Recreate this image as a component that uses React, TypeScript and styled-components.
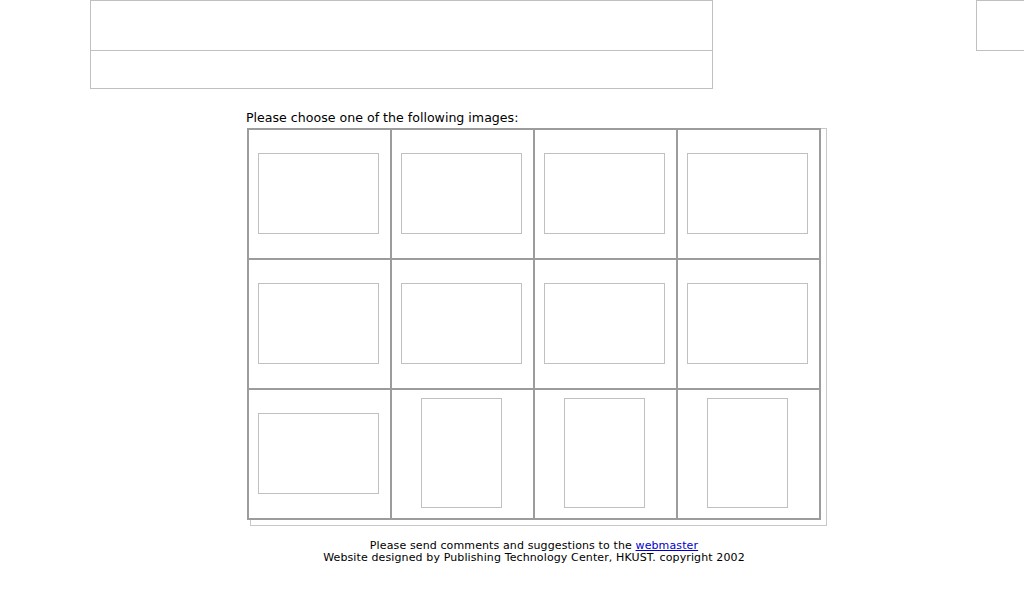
import React from "react";
import styled, { createGlobalStyle } from "styled-components";

const Global = createGlobalStyle`
  html, body { margin: 0; padding: 0; background: #ffffff; }
  body { overflow: hidden; font-family: "DejaVu Sans", Verdana, sans-serif; color: #000; }
`;

const Page = styled.div`
  width: 1024px;
  height: 603px;
  display: flex;
  flex-direction: column;
`;

const Header = styled.div`
  display: flex;
  align-items: flex-start;
  padding-left: 90px;
`;

const Banner = styled.div`
  width: 621px;
  border: 1px solid #c0c0c0;
  display: flex;
  flex-direction: column;
  flex-shrink: 0;
`;

const BannerRow = styled.div<{ $h: number; $divider?: boolean }>`
  height: ${(p) => p.$h}px;
  border-bottom: ${(p) => (p.$divider ? "1px solid #c0c0c0" : "none")};
`;

const SideBanner = styled.div`
  margin-left: auto;
  width: 47px;
  height: 49px;
  border: 1px solid #c0c0c0;
  border-right: none;
  flex-shrink: 0;
`;

const Main = styled.div`
  margin-left: 246px;
  margin-top: 21px;
  display: flex;
  flex-direction: column;
`;

const Caption = styled.div`
  font-size: 12.6px;
  line-height: 16px;
  height: 16px;
  margin-bottom: 2px;
  white-space: nowrap;
`;

const GridWrap = styled.div`
  position: relative;
  margin-left: 1px;
  width: 574px;
  &::before {
    content: "";
    position: absolute;
    left: 3px;
    top: 0;
    width: 575px;
    height: 396px;
    border: 1px solid #c8c8c8;
  }
`;

const Grid = styled.div`
  position: relative;
  display: grid;
  grid-template-columns: repeat(4, 141px);
  grid-auto-rows: 128px;
  gap: 2px;
  padding: 2px;
  background: #9c9c9c;
`;

const Cell = styled.div`
  background: #ffffff;
  display: flex;
  align-items: center;
  justify-content: center;
`;

const Thumb = styled.div<{ $portrait?: boolean }>`
  box-sizing: border-box;
  width: ${(p) => (p.$portrait ? 81 : 121)}px;
  height: ${(p) => (p.$portrait ? 110 : 81)}px;
  border: 1px solid #c0c0c0;
  background: #ffffff;
  margin-left: ${(p) => (p.$portrait ? -2 : -3)}px;
  margin-top: ${(p) => (p.$portrait ? -3 : -2)}px;
`;

const Footer = styled.div`
  margin-left: 247px;
  margin-top: 20px;
  width: 574px;
  text-align: center;
  font-size: 11px;
  letter-spacing: 0.12px;
  line-height: 12px;
  white-space: nowrap;
`;

const Link = styled.a`
  color: #0000cc;
  text-decoration: underline;
`;

const images = [
  false, false, false, false,
  false, false, false, false,
  false, true, true, true,
];

export default function App() {
  return (
    <Page>
      <Global />
      <Header>
        <Banner>
          <BannerRow $h={49} $divider />
          <BannerRow $h={37} />
        </Banner>
        <SideBanner />
      </Header>
      <Main>
        <Caption>Please choose one of the following images:</Caption>
        <GridWrap>
          <Grid>
            {images.map((portrait, i) => (
              <Cell key={i}>
                <Thumb $portrait={portrait} />
              </Cell>
            ))}
          </Grid>
        </GridWrap>
      </Main>
      <Footer>
        Please send comments and suggestions to the <Link href="#">webmaster</Link>
        <br />
        Website designed by Publishing Technology Center, HKUST. copyright 2002
      </Footer>
    </Page>
  );
}
